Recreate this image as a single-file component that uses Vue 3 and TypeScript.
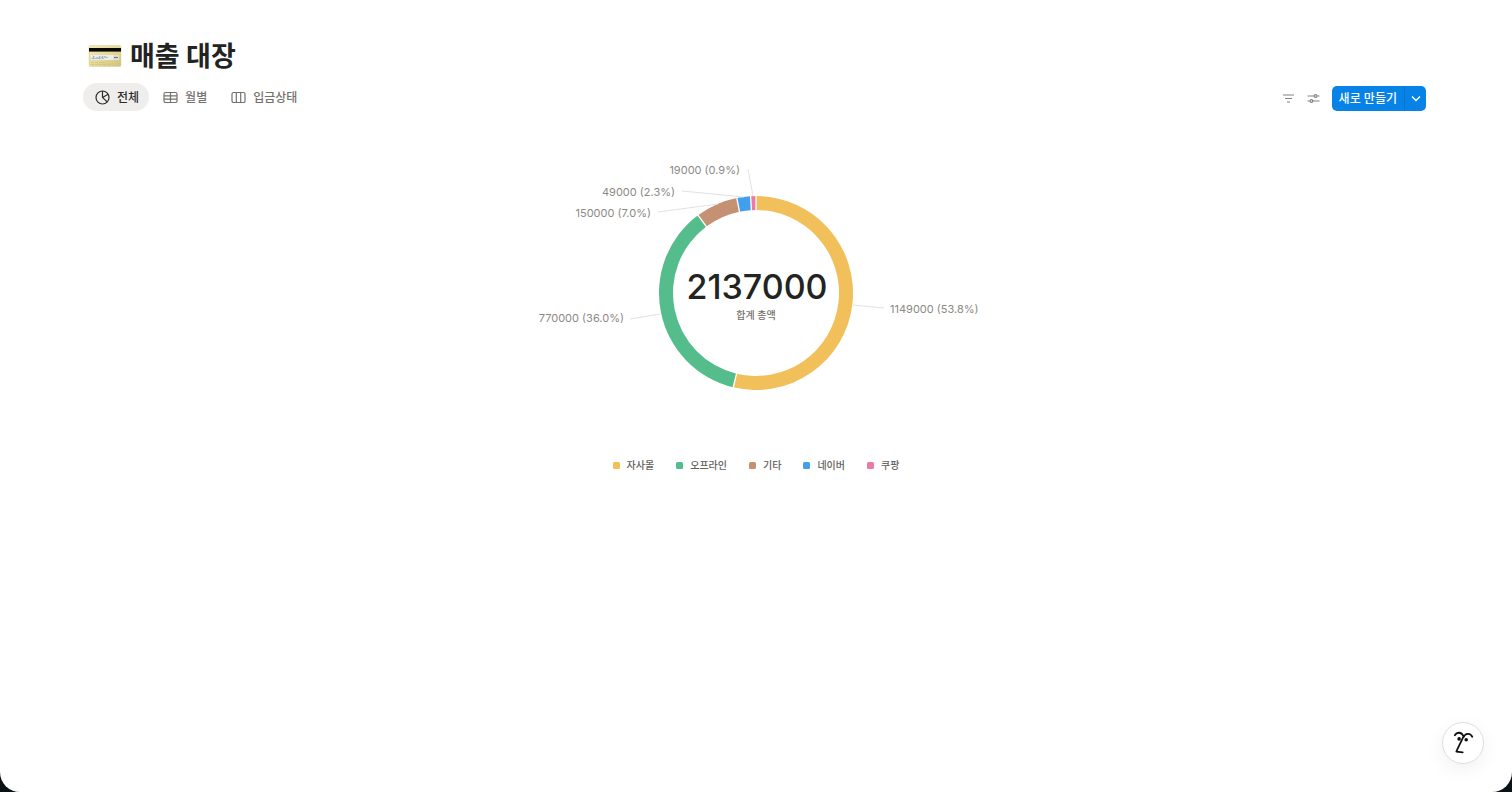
<script setup lang="ts">
import { ref } from 'vue'

interface Slice {
  name: string
  value: number
  color: string
  /** leader line, relative to the ring's centre: x1, y1, x2, y2 */
  line: [number, number, number, number]
  /** label anchor, relative to the ring's centre */
  label: [number, number]
  anchor: 'start' | 'end'
}

const slices: Slice[] = [
  { name: '자사몰', value: 1149000, color: '#f1c05a', line: [97, 12, 128, 15], label: [134, 20], anchor: 'start' },
  { name: '오프라인', value: 770000, color: '#55bd8b', line: [-96, 21, -126, 26], label: [-132, 29], anchor: 'end' },
  { name: '기타', value: 150000, color: '#c49172', line: [-38, -89, -98, -81], label: [-105, -76], anchor: 'end' },
  { name: '네이버', value: 49000, color: '#419fee', line: [-12, -96, -74, -102], label: [-81, -97], anchor: 'end' },
  { name: '쿠팡', value: 19000, color: '#ee79a7', line: [-3, -97, -8, -124], label: [-16, -119], anchor: 'end' },
]

const total = slices.reduce((sum, s) => sum + s.value, 0)
const OUTER = 97
const INNER = 83

function point(r: number, angle: number): string {
  return `${(r * Math.sin(angle)).toFixed(3)} ${(-r * Math.cos(angle)).toFixed(3)}`
}

let turned = 0
const arcs = slices.map((s) => {
  const from = (turned / total) * Math.PI * 2
  turned += s.value
  const to = (turned / total) * Math.PI * 2
  const large = to - from > Math.PI ? 1 : 0
  return {
    ...s,
    text: `${s.value} (${((s.value / total) * 100).toFixed(1)}%)`,
    d: `M${point(OUTER, from)}A${OUTER} ${OUTER} 0 ${large} 1 ${point(OUTER, to)}L${point(INNER, to)}A${INNER} ${INNER} 0 ${large} 0 ${point(INNER, from)}Z`,
    edge: `M${point(OUTER + 1, from)}L${point(INNER - 1, from)}`,
  }
})

const tabs = ['전체', '월별', '입금상태']
const active = ref(0)
</script>

<template>
  <div class="page">
    <header>
      <h1>
        <svg class="card" viewBox="0 0 34 24" aria-hidden="true">
          <defs>
            <linearGradient id="gold" x1="0" y1="0" x2="1" y2="1">
              <stop offset="0" stop-color="#f1eab9" />
              <stop offset=".5" stop-color="#e6da98" />
              <stop offset="1" stop-color="#d0c07c" />
            </linearGradient>
          </defs>
          <rect x="1" y=".5" width="32" height="21" rx="1.500" fill="url(#gold)" stroke="#d9cf9c" stroke-width=".5" />
          <rect x="1" y="3" width="32" height="3.600" fill="#080808" />
          <rect x="3" y="10" width="22" height="5" fill="#eeeee8" />
          <rect x="25" y="10" width="6" height="5" fill="#e2e0d8" />
          <path d="M4 14l2-3-1 3 2-1 1 1 1-2 1 2 2-3-1 3 2-1 2-2-1 3 2-1 1-2 1 2 2-1" fill="none" stroke="#86a5c9" stroke-width=".7" />
          <path d="M26 12.500h4" stroke="#77746b" stroke-width="1.200" />
          <path d="M3 17.500h14M3 19.500h20" stroke="#c9ba78" stroke-width=".6" stroke-dasharray="3 1" />
        </svg>
        매출 대장
      </h1>
      <div class="bar">
        <nav class="tabs">
          <button v-for="(tab, i) in tabs" :key="tab" type="button" class="tab" :class="{ on: i === active }" @click="active = i">
            <svg v-if="i === 0" class="icon" viewBox="0 0 15 15" aria-hidden="true">
              <circle cx="7.500" cy="7.500" r="6.500" />
              <path d="M7.500 1v6.500l4.700 4.400M7.500 7.500l5.600-3.300" />
            </svg>
            <svg v-else-if="i === 1" class="icon" viewBox="0 0 15 15" aria-hidden="true">
              <rect x="1" y="2.500" width="13" height="10" rx="1.600" />
              <path d="M1 5.800h13M1 9.200h13M7.500 2.500v10" />
            </svg>
            <svg v-else class="icon" viewBox="0 0 15 15" aria-hidden="true">
              <rect x="1" y="2.500" width="13" height="10" rx="1.600" />
              <path d="M5.300 2.500v10M9.700 2.500v10" />
            </svg>
            <span>{{ tab }}</span>
          </button>
        </nav>
        <div class="tools">
          <button type="button" class="tool" aria-label="필터">
            <svg viewBox="0 0 13 13" aria-hidden="true"><path d="M1 3h11M3 6.500h7M5 10h3" /></svg>
          </button>
          <button type="button" class="tool" aria-label="설정">
            <svg viewBox="0 0 13 13" aria-hidden="true">
              <path d="M.5 4h6.500M10.300 4h2.200M.5 9h2.200M6 9h6.500" />
              <circle cx="8.600" cy="4" r="1.400" />
              <circle cx="4.400" cy="9" r="1.400" />
            </svg>
          </button>
          <div class="create">
            <button type="button" class="new"><span>새로 만들기</span></button>
            <button type="button" class="more" aria-label="더 보기">
              <svg viewBox="0 0 10 10" aria-hidden="true"><path d="M1 3.500 5 7.500l4-4" /></svg>
            </button>
          </div>
        </div>
      </div>
    </header>

    <main>
      <svg class="chart" viewBox="-240 -148 480 280" role="img" aria-label="매출 대장">
        <path v-for="a in arcs" :key="a.name" :d="a.d" :fill="a.color" />
        <path v-for="a in arcs" :key="a.edge" :d="a.edge" class="edge" />
        <g v-for="a in arcs" :key="a.value">
          <line class="leader" :x1="a.line[0]" :y1="a.line[1]" :x2="a.line[2]" :y2="a.line[3]" />
          <text class="value" :x="a.label[0]" :y="a.label[1]" :text-anchor="a.anchor">{{ a.text }}</text>
        </g>
        <text class="total" x="1" y="6" text-anchor="middle">{{ total }}</text>
        <text class="caption" x="0" y="26" text-anchor="middle">합계 총액</text>
      </svg>
      <ul class="legend">
        <li v-for="s in slices" :key="s.name">
          <svg class="swatch" viewBox="0 0 7 7" aria-hidden="true"><rect width="7" height="7" rx="1.500" :fill="s.color" /></svg>
          {{ s.name }}
        </li>
      </ul>
    </main>

    <button type="button" class="assistant" aria-label="AI">
      <svg viewBox="0 0 24 26" aria-hidden="true">
        <path d="M3.800 5.300C5.800 1.800 10.500 1.800 12.300 6M12.500 7.300C14 3 19.300 2.500 21.300 6.800M12.400 6.500C10.500 11.500 7.300 16.500 5.400 21.600L11.700 22.300" />
        <circle cx="8.100" cy="8.900" r="1.800" />
        <circle cx="15.200" cy="9.800" r="1.800" />
      </svg>
    </button>
  </div>
</template>

<style>
body {
  margin: 0;
  background: #0b1216;
}
</style>

<style scoped>
.page {
  box-sizing: border-box;
  min-height: 100vh;
  padding: 38px 86px 0 83px;
  border-radius: 0 0 20px 20px;
  background: #fff;
  color: #232322;
  font-family: Inter, "Noto Sans CJK KR", sans-serif;
}
button {
  padding: 0;
  border: 0;
  background: none;
  font: inherit;
  color: inherit;
  cursor: pointer;
}
h1 {
  display: flex;
  align-items: center;
  gap: 8px;
  margin: 0 0 7px;
  padding-left: 5px;
  font-size: 27px;
  line-height: 38px;
  font-weight: 700;
}
.card {
  width: 34px;
  height: 24px;
}
.bar,
.tabs,
.tools,
.create,
.tab,
.legend,
.legend li {
  display: flex;
  align-items: center;
}
.bar {
  justify-content: space-between;
}
.tabs {
  gap: 2px;
}
.tab {
  gap: 7px;
  height: 28px;
  padding: 0 10px 0 12px;
  border-radius: 14px;
  font-size: 12px;
  font-weight: 500;
  color: #74726d;
}
.tab.on {
  background: #efeeed;
  color: #2c2c2b;
}
.tab span,
.new span {
  display: block;
  padding-bottom: 2px;
}
.icon {
  width: 15px;
  height: 15px;
  fill: none;
  stroke: currentColor;
  stroke-width: 1.2;
}
.tools {
  gap: 12px;
  padding-top: 2px;
}
.tool svg {
  display: block;
  width: 13px;
  height: 13px;
  fill: none;
  stroke: #84827d;
  stroke-width: 1.2;
}
.create {
  height: 25px;
  border-radius: 5px;
  overflow: hidden;
  background: #0783e8;
  color: #fff;
}
.new {
  height: 100%;
  padding: 0 7px;
  font-size: 12px;
  font-weight: 500;
}
.more {
  display: grid;
  place-items: center;
  width: 22px;
  height: 100%;
  border-left: 1px solid #0874cc;
}
.more svg {
  width: 10px;
  height: 10px;
  fill: none;
  stroke: #fff;
  stroke-width: 1.3;
}
main {
  display: flex;
  flex-direction: column;
  align-items: center;
  padding: 34px 0 0 3px;
}
.chart {
  width: 480px;
  max-width: 100%;
}
.edge {
  fill: none;
  stroke: #fff;
  stroke-width: 1.3;
}
.leader {
  stroke: #e3e2e0;
  stroke-width: 1;
}
.value {
  font-size: 11px;
  fill: #8b8984;
}
.total {
  font-size: 34px;
  font-weight: 500;
  fill: #232322;
}
.caption {
  font-size: 10px;
  font-weight: 500;
  fill: #73716c;
}
.legend {
  flex-wrap: wrap;
  gap: 22px;
  margin: 32px 0 0;
  padding: 0;
  list-style: none;
  font-size: 10px;
  line-height: 16px;
  font-weight: 500;
  color: #64625d;
}
.legend li {
  gap: 7px;
}
.swatch {
  width: 7px;
  height: 7px;
}
.assistant {
  position: fixed;
  right: 28px;
  bottom: 28px;
  display: grid;
  place-items: center;
  width: 42px;
  height: 42px;
  border: 1px solid #dededd;
  border-radius: 50%;
  background: #fff;
  box-shadow: 0 6px 20px rgba(0, 0, 0, 0.06);
}
.assistant svg {
  width: 24px;
  height: 26px;
  fill: none;
  stroke: #111;
  stroke-width: 1.8;
  stroke-linecap: round;
  stroke-linejoin: round;
}
.assistant circle {
  fill: #111;
  stroke: none;
}
</style>
